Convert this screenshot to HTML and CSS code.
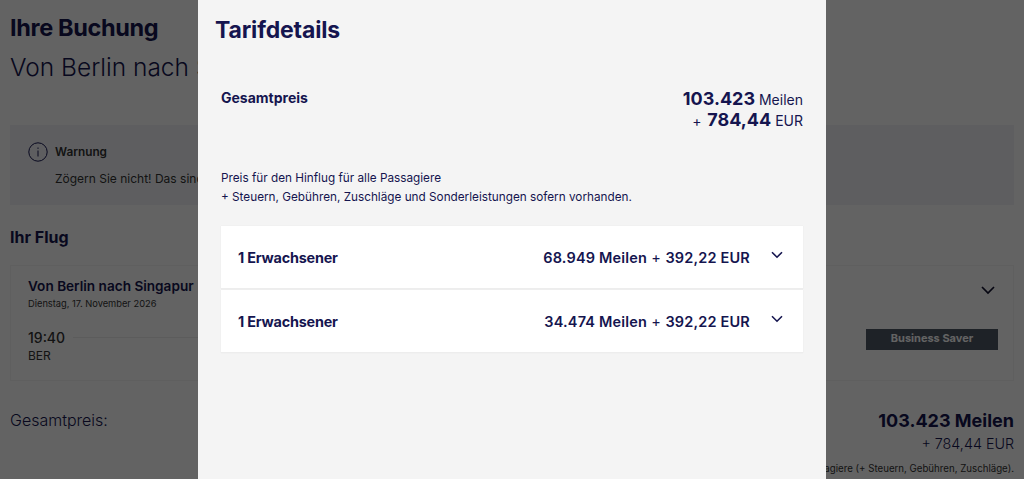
FILE: index.html
```html
<!DOCTYPE html>
<html lang="de">
<head>
  <meta charset="UTF-8" />
  <meta name="viewport" content="width=device-width, initial-scale=1.0"/>
  <title>Ihre Buchung</title>
  <link rel="stylesheet" href="styles.css">
</head>
<body>

<main class="seite">
  <h1>Ihre Buchung</h1>
  <p class="route">Von Berlin nach Singapur</p>

  <section class="warnung">
    <div class="warnung-kopf">
      <svg class="info-icon" width="20" height="20" viewBox="0 0 20 20" fill="none" stroke="#15154f" stroke-width="1">
        <circle cx="10" cy="10" r="9.2"/>
        <path d="M10 8.5v6M10 5.5v1.4"/>
      </svg>
      <strong>Warnung</strong>
    </div>
    <p>Zögern Sie nicht! Das sind</p>
  </section>

  <h2>Ihr Flug</h2>

  <section class="flug">
    <div class="flug-links">
      <h3>Von Berlin nach Singapur</h3>
      <p class="datum">Dienstag, 17. November 2026</p>
      <div class="zeit">
        <span>19:40</span>
        <i class="linie"></i>
      </div>
      <p class="code">BER</p>
    </div>
    <div class="flug-rechts">
      <svg class="chevron-gross" width="14" height="9" viewBox="0 0 14 9" fill="none" stroke="#10102e" stroke-width="1.7">
        <path d="M1 1l6 6 6-6"/>
      </svg>
      <span class="tarif">Business Saver</span>
    </div>
  </section>

  <section class="summe">
    <p class="summe-label">Gesamtpreis:</p>
    <div class="summe-preis">
      <strong>103.423 Meilen</strong>
      <span>+ 784,44 EUR</span>
      <small>Preis für den Hinflug für alle Passagiere (+ Steuern, Gebühren, Zuschläge).</small>
    </div>
  </section>
</main>

<div class="overlay"></div>

<aside class="modal">
  <h2 class="modal-titel">Tarifdetails</h2>

  <div class="modal-inhalt">
    <div class="gesamt">
      <strong>Gesamtpreis</strong>
      <div class="gesamt-preis">
        <div><b>103.423</b> Meilen</div>
        <div><span class="plus">+</span> <b>784,44</b> EUR</div>
      </div>
    </div>

    <p class="hinweis">Preis für den Hinflug für alle Passagiere<br>+ Steuern, Gebühren, Zuschläge und Sonderleistungen sofern vorhanden.</p>

    <div class="zeile">
      <span class="pax">1 Erwachsener</span>
      <span class="betrag"><b>68.949 Meilen</b> + <b>392,22 EUR</b></span>
      <svg class="chevron" width="12" height="8" viewBox="0 0 12 8" fill="none" stroke="#15154f" stroke-width="1.6">
        <path d="M1 1.2l5 5 5-5"/>
      </svg>
    </div>
    <div class="zeile">
      <span class="pax">1 Erwachsener</span>
      <span class="betrag"><b>34.474 Meilen</b> + <b>392,22 EUR</b></span>
      <svg class="chevron" width="12" height="8" viewBox="0 0 12 8" fill="none" stroke="#15154f" stroke-width="1.6">
        <path d="M1 1.2l5 5 5-5"/>
      </svg>
    </div>
  </div>
</aside>

</body>
</html>
```

FILE: styles.css
```css
html, body {
  height: 100%;
}
body {
  margin: 0;
  overflow: hidden;
  font-family: Inter, "Liberation Sans", sans-serif;
  color: #15154f;
  background-color: #fff;
}
p, h1, h2, h3 {
  margin: 0;
}

/* Seite hinter dem Dialog */
.seite {
  padding: 14px 10px 0;
}
.seite h1 {
  font-size: 23.5px;
  line-height: 27px;
  font-weight: 700;
  letter-spacing: -0.35px;
}
.route {
  margin-top: 10px;
  font-size: 24.5px;
  line-height: 32px;
  font-weight: 300;
}
.warnung {
  margin-top: 42px;
  height: 80px;
  box-sizing: border-box;
  padding: 17px 18px;
  background-color: #f2f3f8;
  color: #333;
}
.warnung-kopf {
  display: flex;
  align-items: center;
  gap: 7px;
  font-size: 11.8px;
}
.warnung-kopf strong {
  font-weight: 600;
}
.warnung p {
  margin: 9px 0 0 27px;
  font-size: 12px;
}
.seite > h2 {
  margin-top: 23px;
  font-size: 16px;
  line-height: 18px;
  font-weight: 700;
}
.flug {
  display: flex;
  justify-content: space-between;
  margin-top: 19px;
  height: 116px;
  box-sizing: border-box;
  padding: 12px 15px 0 17px;
  background-color: #fff;
  border: 1px solid #f5f5f5;
}
.flug-links {
  width: 400px;
}
.flug-links h3 {
  font-size: 13.6px;
  line-height: 16px;
  font-weight: 600;
}
.datum {
  margin-top: 3px;
  font-size: 9.3px;
  line-height: 13px;
  color: #333;
}
.zeit {
  display: flex;
  align-items: center;
  gap: 8px;
  margin-top: 19px;
  font-size: 14px;
  line-height: 17px;
  font-weight: 500;
  color: #333;
}
.linie {
  flex: 1;
  height: 1px;
  background-color: #eee;
}
.code {
  margin-top: 2px;
  font-size: 12px;
  color: #333;
}
.flug-rechts {
  display: flex;
  flex-direction: column;
  align-items: flex-end;
}
.chevron-gross {
  margin: 8px 3px 0 0;
}
.tarif {
  margin-top: 34px;
  width: 132px;
  height: 21px;
  background-color: #4e5866;
  color: #fff;
  font-size: 11px;
  font-weight: 700;
  line-height: 19px;
  text-align: center;
}
.summe {
  display: flex;
  justify-content: space-between;
  margin-top: 28px;
}
.summe-label {
  font-size: 16px;
  line-height: 22px;
  font-weight: 300;
}
.summe-preis {
  display: flex;
  flex-direction: column;
  align-items: flex-end;
}
.summe-preis strong {
  font-size: 18px;
  line-height: 23px;
}
.summe-preis span {
  margin-top: 3px;
  font-size: 14.3px;
  line-height: 18px;
  font-weight: 300;
}
.summe-preis small {
  margin-top: 10px;
  font-size: 9.7px;
  line-height: 12px;
  color: #333;
}

/* Dialog */
.overlay {
  position: fixed;
  inset: 0;
  background-color: rgba(0, 0, 0, 0.61);
}
.modal {
  position: fixed;
  top: 0;
  bottom: 0;
  left: 198px;
  width: 628px;
  box-sizing: border-box;
  padding: 17px 23px 0 17px;
  background-color: #f4f4f4;
}
.modal-titel {
  font-size: 23px;
  line-height: 27px;
  font-weight: 700;
  letter-spacing: -0.15px;
}
.modal-inhalt {
  margin: 0 0 0 6px;
}
.gesamt {
  display: flex;
  justify-content: space-between;
  margin-top: 46px;
  font-size: 14px;
}
.gesamt > strong {
  font-weight: 700;
  line-height: 16px;
}
.gesamt-preis {
  margin-top: -1px;
  text-align: right;
  font-size: 14px;
  line-height: 20px;
}
.gesamt-preis b {
  font-size: 18px;
  font-weight: 700;
}
.plus {
  margin-right: 2px;
}
.hinweis {
  margin-top: 38px;
  font-size: 11.75px;
  line-height: 19px;
}
.zeile {
  display: flex;
  align-items: center;
  box-sizing: border-box;
  height: 63px;
  margin-top: 1px;
  padding: 0 20px 0 17px;
  background-color: #fff;
  border-bottom: 1px solid #ededed;
  box-shadow: 0 0 1px rgba(0, 0, 0, 0.08);
  font-size: 14.5px;
}
.hinweis + .zeile {
  margin-top: 19px;
}
.pax {
  font-size: 14.4px;
  font-weight: 700;
  letter-spacing: -0.2px;
}
.betrag {
  margin-left: auto;
  letter-spacing: 0.18px;
}
.betrag b {
  font-weight: 600;
}
.chevron {
  margin: -4px 0 0 21px;
}
```
